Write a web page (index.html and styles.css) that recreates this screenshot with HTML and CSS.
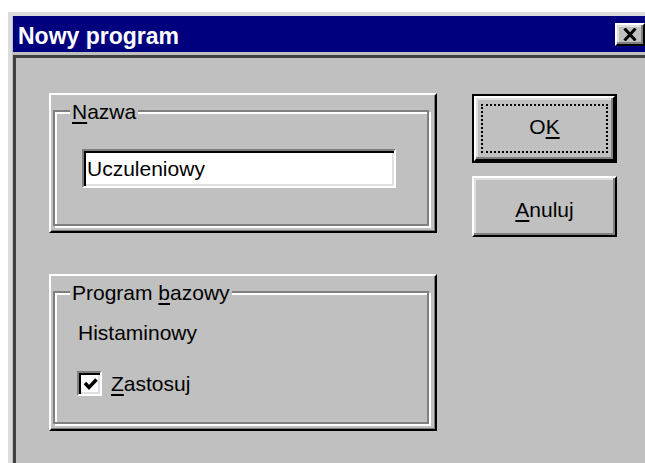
FILE: index.html
```html
<!DOCTYPE html>
<html lang="pl">
<head>
<meta charset="utf-8">
<title>Nowy program</title>
<link rel="stylesheet" href="styles.css">
</head>
<body>
<div class="window">
  <div class="titlebar">
    <span class="title">Nowy program</span>
    <span class="close" aria-label="Zamknij">
      <svg width="14" height="13" viewBox="0 0 14 13">
        <path d="M1.5 0.5 L12.5 12.5 M12.5 0.5 L1.5 12.5" stroke="#000" stroke-width="3" fill="none"/>
      </svg>
    </span>
  </div>
  <div class="client">
    <div class="panels">
      <div class="panel">
        <div class="group group-name">
          <div class="legend"><u>N</u>azwa</div>
          <div class="field">Uczuleniowy</div>
        </div>
      </div>
      <div class="panel panel-base">
        <div class="group group-base">
          <div class="legend">Program <u>b</u>azowy</div>
          <div class="value">Histaminowy</div>
          <div class="check">
            <span class="box">
              <svg width="17" height="17" viewBox="0 0 17 17">
                <polyline points="3,7 7,11.5 14.5,3.5" stroke="#000" stroke-width="3.5" fill="none" stroke-linejoin="miter"/>
              </svg>
            </span>
            <span class="check-label"><u>Z</u>astosuj</span>
          </div>
        </div>
      </div>
    </div>
    <div class="buttons">
      <div class="btn-default">
        <div class="btn-face">
          <span class="focus">O<u>K</u></span>
        </div>
      </div>
      <div class="btn">
        <span class="btn-label"><u>A</u>nuluj</span>
      </div>
    </div>
  </div>
</div>
</body>
</html>
```

FILE: styles.css
```css
html, body {
  margin: 0;
  padding: 0;
  background: #ffffff;
  overflow: hidden;
  width: 645px;
  height: 463px;
}

body {
  font-family: "Liberation Sans", Arial, sans-serif;
  font-size: 21px;
  color: #000;
}

u {
  text-decoration-thickness: 2px;
  text-underline-offset: 3px;
}

/* dialog frame */
.window {
  margin: 12px 0 0 8px;
  width: 637px;
  height: 451px;
  box-sizing: border-box;
  background: #c0c0c0;
  border-top: 4px solid #dcdcdc;
  border-left: 4px solid #dcdcdc;
  display: flex;
  flex-direction: column;
}

.titlebar {
  margin-left: 1px;
  height: 36px;
  box-sizing: border-box;
  padding: 4px 0 0 5px;
  background: #00007f;
  display: flex;
  align-items: center;
  flex-shrink: 0;
}

.title {
  color: #fff;
  font-weight: bold;
  font-size: 23px;
  line-height: 26px;
  white-space: nowrap;
}

.close {
  margin: 3px 0 0 auto;
  align-self: flex-start;
  width: 30px;
  height: 23px;
  box-sizing: border-box;
  background: #c0c0c0;
  border: 2px solid;
  border-color: #fff #000 #000 #fff;
  box-shadow: inset -2px -2px #808080, inset 2px 2px #dfdfdf;
  display: flex;
  align-items: center;
  justify-content: center;
}

.close svg {
  display: block;
  margin: 0 1px 0 0;
}

/* client area */
.client {
  flex: 1;
  min-height: 0;
  margin: 3px 0 0 1px;
  border-top: 3px solid #404040;
  border-left: 3px solid #404040;
  padding: 35px 0 0 33px;
  display: flex;
  align-items: flex-start;
}

.panels {
  display: flex;
  flex-direction: column;
}

.panel {
  width: 388px;
  box-sizing: border-box;
  border: 2px solid;
  border-color: #fff #000 #000 #fff;
  box-shadow: inset -1px -1px #7a7a7a;
  padding: 15px 6px 5px 2px;
}

.panel-base {
  margin-top: 41px;
}

/* etched group box */
.group {
  box-sizing: border-box;
  border: 2px solid #808080;
  box-shadow: inset 2px 2px #fff, 2px 2px #fff;
  display: flex;
  flex-direction: column;
  align-items: flex-start;
}

.group-name {
  height: 116px;
}

.group-base {
  height: 133px;
}

.legend {
  margin: -12px 0 0 15px;
  padding: 0 2px;
  background: #c0c0c0;
  line-height: 24px;
  white-space: nowrap;
}

.field {
  margin: 25px 0 0 27px;
  width: 314px;
  height: 39px;
  box-sizing: border-box;
  background: #fff;
  border: 2px solid;
  border-color: #808080 #fff #fff #808080;
  box-shadow: inset 2px 2px #000, inset -2px -2px #dfdfdf;
  padding: 0 0 0 3px;
  line-height: 35px;
  font-size: 21px;
}

.value {
  margin: 16px 0 0 23px;
  line-height: 24px;
}

.check {
  margin: 26px 0 0 22px;
  display: flex;
  align-items: center;
  gap: 9px;
}

.box {
  width: 25px;
  height: 25px;
  box-sizing: border-box;
  background: #fff;
  border: 2px solid;
  border-color: #808080 #fff #fff #808080;
  box-shadow: inset 2px 2px #000, inset -2px -2px #dfdfdf;
  display: flex;
  align-items: center;
  justify-content: center;
}

.box svg {
  display: block;
  margin: 1px 0 0 1px;
}

.check-label {
  line-height: 24px;
}

/* push buttons */
.buttons {
  margin: 1px 0 0 35px;
  display: flex;
  flex-direction: column;
  gap: 13px;
}

.btn-default {
  width: 145px;
  height: 69px;
  box-sizing: border-box;
  border: 2px solid #000;
  display: flex;
}

.btn-face {
  flex: 1;
  border: 2px solid;
  border-color: #fff #000 #000 #fff;
  box-shadow: inset -2px -2px #808080, inset 2px 2px #dfdfdf;
  display: flex;
  align-items: center;
  justify-content: center;
}

.focus {
  width: 127px;
  height: 49px;
  box-sizing: border-box;
  border: 2px dotted #000;
  display: flex;
  align-items: center;
  justify-content: center;
  line-height: 24px;
  padding-bottom: 4px;
}

.btn {
  width: 145px;
  height: 61px;
  box-sizing: border-box;
  border: 2px solid;
  border-color: #fff #000 #000 #fff;
  box-shadow: inset -2px -2px #808080, inset 2px 2px #dfdfdf;
  display: flex;
  align-items: center;
  justify-content: center;
}

.btn-label {
  line-height: 24px;
  padding-top: 6px;
}
```
